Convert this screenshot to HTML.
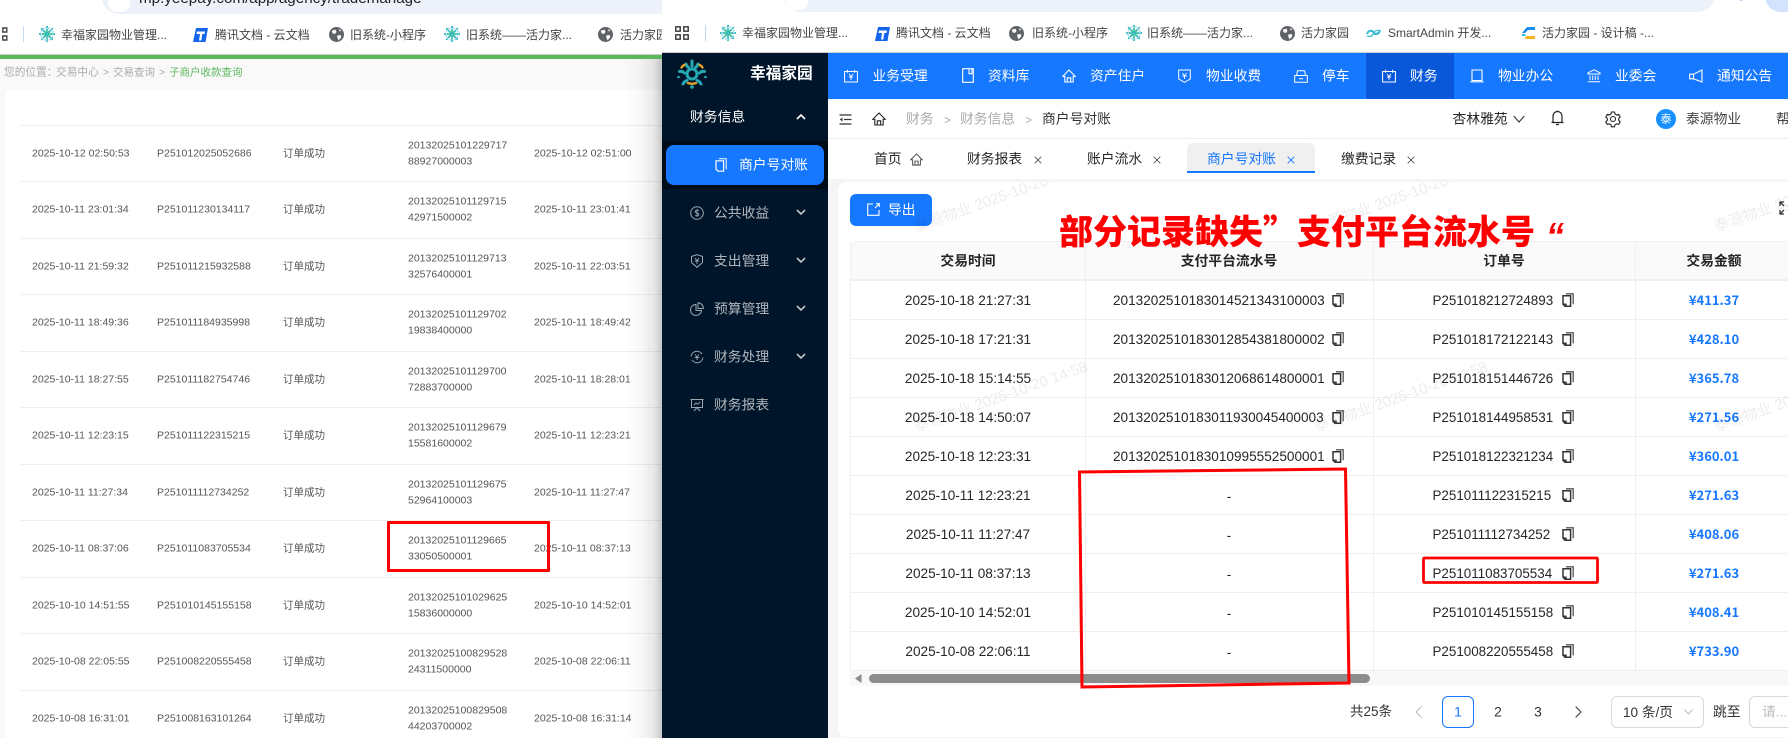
<!DOCTYPE html>
<html lang="zh-CN"><head><meta charset="utf-8"><title>商户号对账</title>
<style>
*{box-sizing:border-box}
html,body{margin:0;padding:0;width:1788px;height:738px;overflow:hidden;background:#fff;font-family:"Liberation Sans","Noto Sans CJK SC",sans-serif}
.a{position:absolute}
.l,.c{position:absolute;white-space:nowrap;line-height:1.2;margin-top:1px}
.l{transform:translateY(-50%)}
.c{transform:translate(-50%,-50%)}
.lt{font-size:10.5px;color:#555}
.bk{font-size:12px;color:#444}
.nav{font-size:13.8px;color:#fff}
.sd{font-size:13.8px;color:rgba(255,255,255,.68)}
.td{font-size:13.6px;color:#262626}
.po{font-size:13.4px;color:#262626}
.th{font-size:13.8px;color:#262626;font-weight:700}
.am{font-family:"Noto Sans CJK SC","Liberation Sans",sans-serif;font-size:13px;color:#1677ff;font-weight:600}
.hl{position:absolute;height:1px;background:#efefef}
.vl{position:absolute;width:1px;background:#efefef}
.wm{position:absolute;white-space:nowrap;font-size:15px;line-height:16px;color:rgba(0,0,0,.075);transform:rotate(-19.5deg);transform-origin:0 50%}
svg{position:absolute;overflow:visible;fill:none}
</style></head><body>
<svg width="0" height="0" style="position:absolute">
<defs>
<symbol id="flake" viewBox="0 0 14 14"><g stroke="#2ab4c0" stroke-width="1.500" stroke-dasharray="1.800 .7"><path d="M7 0v14M0 7h14M2 2l10 10M12 2L2 12"/></g><circle cx="7" cy="7" r="2.400" stroke="#5fcba0" stroke-width="1.400"/><circle cx="7" cy="7" r="5.400" stroke="#6dc9d6" stroke-width="1.300" stroke-dasharray="1.200 1.200"/></symbol>
<symbol id="globe" viewBox="0 0 14 14"><circle cx="7" cy="7" r="7" fill="#5f6368"/><path d="M2.500 3.500L6 2.500l1 2-1.500 2-2-.5zM7.500 8l3.500-.5.5 2-2.500 3-1-2zM9.500 1.800l2 1.500-1.500 1z" fill="#fff"/></symbol>
<symbol id="tx" viewBox="0 0 15 15"><path d="M3 1h12l-2.500 14H0z" fill="#1366ec"/><path d="M4 4.500h8l-.5 2.500H9.300l-1 6.500H6l1-6.500H3.500z" fill="#fff"/></symbol>
<symbol id="grid" viewBox="0 0 14 14"><g stroke="#444" stroke-width="1.500"><rect x=".8" y=".8" width="4.400" height="4.400"/><rect x="8.800" y=".8" width="4.400" height="4.400"/><rect x=".8" y="8.800" width="4.400" height="4.400"/><rect x="8.800" y="8.800" width="4.400" height="4.400"/></g></symbol>
<symbol id="copy" viewBox="0 0 12 14"><path d="M4 .8h7.200v10.400" stroke="#555" stroke-width="1.300"/><path d="M1 2.800h7.600v10.400H3L1 11.200z" stroke="#333" stroke-width="1.500" fill="#fff"/><path d="M1 11.200h3v2" stroke="#333" stroke-width="1.400"/></symbol>
<symbol id="hm" viewBox="0 0 14 14"><path d="M7 1L.8 7.300h2V13h8.400V7.300h2zM5.300 13V8.800h3.400V13" stroke="currentColor" stroke-width="1.100"/></symbol>
<symbol id="x" viewBox="0 0 8 8"><path d="M.7.7l6.600 6.600M7.300.7L.7 7.300" stroke="currentColor" stroke-width=".9"/></symbol>
<symbol id="chev" viewBox="0 0 10 6"><path d="M1 1l4 4 4-4" stroke="currentColor" stroke-width="1.600"/></symbol>
</defs></svg>

<!-- LEFT WINDOW -->
<div class="a" style="left:0;top:0;width:662px;height:738px;background:#fff;overflow:hidden">
 <div class="a" style="left:102px;top:-20px;width:600px;height:34px;background:#edf2fa;border-radius:17px"></div>
 <div class="a" style="left:108px;top:-6px;width:22px;height:18px;border-radius:10px;background:#fff"></div>
 <svg style="left:70px;top:-8px" width="16" height="12"><circle cx="6" cy="2" r="5" stroke="#444" stroke-width="1.500"/></svg>
 <svg style="left:0;top:-4px" width="50" height="10"><path d="M3 0l-2 2 2 2M38 0l2 2-2 2" stroke="#888" stroke-width="1.200"/></svg>
 <div class="l" style="left:139px;top:-2px;font-size:15.200px;color:#222">mp.yeepay.com/app/agency/trademanage</div>
 <svg style="left:2px;top:27px" width="6" height="14"><path d="M.8 1h4v4h-4zM.8 9h4v4h-4z" stroke="#444" stroke-width="1.400"/></svg>
 <div class="a" style="left:23px;top:26px;width:1px;height:16px;background:#c7d7f0"></div>
 <svg style="left:39px;top:26px" width="16" height="16"><use href="#flake"/></svg><div class="l bk" style="left:61px;top:34px">幸福家园物业管理...</div>
 <svg style="left:193px;top:27px" width="15" height="15"><use href="#tx"/></svg><div class="l bk" style="left:215px;top:34px">腾讯文档 - 云文档</div>
 <svg style="left:329px;top:27px" width="15" height="15"><use href="#globe"/></svg><div class="l bk" style="left:350px;top:34px">旧系统-小程序</div>
 <svg style="left:444px;top:26px" width="16" height="16"><use href="#flake"/></svg><div class="l bk" style="left:466px;top:34px">旧系统——活力家...</div>
 <svg style="left:598px;top:27px" width="15" height="15"><use href="#globe"/></svg><div class="l bk" style="left:620px;top:34px">活力家园</div>
 <div class="a" style="left:0;top:54px;width:662px;height:1px;background:#ccc"></div>
 <div class="a" style="left:0;top:55px;width:662px;height:4px;background:#5cb85c"></div>
 <div class="a" style="left:0;top:59px;width:662px;height:679px;background:#f9f9f9"></div>
 <div class="l lt" style="left:4px;top:72px;color:#aaa;font-size:10.700px">您的位置：</div>
 <div class="l lt" style="left:56px;top:72px;color:#aaa;font-size:10.700px">交易中心</div>
 <div class="l lt" style="left:103px;top:72px;color:#aaa">&gt;</div>
 <div class="l lt" style="left:113px;top:72px;color:#aaa">交易查询</div>
 <div class="l lt" style="left:159px;top:72px;color:#aaa">&gt;</div>
 <div class="l lt" style="left:169px;top:72px;color:#5cb85c">子商户收款查询</div>
 <div class="a" style="left:5px;top:90px;width:657px;height:648px;background:#fff"></div>

 <div class="hl" style="left:20px;width:642px;top:125px"></div>
 <div class="hl" style="left:20px;width:642px;top:181px"></div>
 <div class="hl" style="left:20px;width:642px;top:238px"></div>
 <div class="hl" style="left:20px;width:642px;top:294px"></div>
 <div class="hl" style="left:20px;width:642px;top:351px"></div>
 <div class="hl" style="left:20px;width:642px;top:407px"></div>
 <div class="hl" style="left:20px;width:642px;top:464px"></div>
 <div class="hl" style="left:20px;width:642px;top:520px"></div>
 <div class="hl" style="left:20px;width:642px;top:577px"></div>
 <div class="hl" style="left:20px;width:642px;top:633px"></div>
 <div class="hl" style="left:20px;width:642px;top:690px"></div>

 <div class="l lt" style="left:32px;top:153px">2025-10-12 02:50:53</div><div class="l lt" style="left:157px;top:153px">P251012025052686</div><div class="l lt" style="left:283px;top:153px">订单成功</div><div class="l lt" style="left:408px;top:145px">20132025101229717</div><div class="l lt" style="left:408px;top:161px">88927000003</div><div class="l lt" style="left:534px;top:153px">2025-10-12 02:51:00</div>
 <div class="l lt" style="left:32px;top:209px">2025-10-11 23:01:34</div><div class="l lt" style="left:157px;top:209px">P251011230134117</div><div class="l lt" style="left:283px;top:209px">订单成功</div><div class="l lt" style="left:408px;top:201px">20132025101129715</div><div class="l lt" style="left:408px;top:217px">42971500002</div><div class="l lt" style="left:534px;top:209px">2025-10-11 23:01:41</div>
 <div class="l lt" style="left:32px;top:266px">2025-10-11 21:59:32</div><div class="l lt" style="left:157px;top:266px">P251011215932588</div><div class="l lt" style="left:283px;top:266px">订单成功</div><div class="l lt" style="left:408px;top:258px">20132025101129713</div><div class="l lt" style="left:408px;top:274px">32576400001</div><div class="l lt" style="left:534px;top:266px">2025-10-11 22:03:51</div>
 <div class="l lt" style="left:32px;top:322px">2025-10-11 18:49:36</div><div class="l lt" style="left:157px;top:322px">P251011184935998</div><div class="l lt" style="left:283px;top:322px">订单成功</div><div class="l lt" style="left:408px;top:314px">20132025101129702</div><div class="l lt" style="left:408px;top:330px">19838400000</div><div class="l lt" style="left:534px;top:322px">2025-10-11 18:49:42</div>
 <div class="l lt" style="left:32px;top:379px">2025-10-11 18:27:55</div><div class="l lt" style="left:157px;top:379px">P251011182754746</div><div class="l lt" style="left:283px;top:379px">订单成功</div><div class="l lt" style="left:408px;top:371px">20132025101129700</div><div class="l lt" style="left:408px;top:387px">72883700000</div><div class="l lt" style="left:534px;top:379px">2025-10-11 18:28:01</div>
 <div class="l lt" style="left:32px;top:435px">2025-10-11 12:23:15</div><div class="l lt" style="left:157px;top:435px">P251011122315215</div><div class="l lt" style="left:283px;top:435px">订单成功</div><div class="l lt" style="left:408px;top:427px">20132025101129679</div><div class="l lt" style="left:408px;top:443px">15581600002</div><div class="l lt" style="left:534px;top:435px">2025-10-11 12:23:21</div>
 <div class="l lt" style="left:32px;top:492px">2025-10-11 11:27:34</div><div class="l lt" style="left:157px;top:492px">P251011112734252</div><div class="l lt" style="left:283px;top:492px">订单成功</div><div class="l lt" style="left:408px;top:484px">20132025101129675</div><div class="l lt" style="left:408px;top:500px">52964100003</div><div class="l lt" style="left:534px;top:492px">2025-10-11 11:27:47</div>
 <div class="l lt" style="left:32px;top:548px">2025-10-11 08:37:06</div><div class="l lt" style="left:157px;top:548px">P251011083705534</div><div class="l lt" style="left:283px;top:548px">订单成功</div><div class="l lt" style="left:408px;top:540px">20132025101129665</div><div class="l lt" style="left:408px;top:556px">33050500001</div><div class="l lt" style="left:534px;top:548px">2025-10-11 08:37:13</div>
 <div class="l lt" style="left:32px;top:605px">2025-10-10 14:51:55</div><div class="l lt" style="left:157px;top:605px">P251010145155158</div><div class="l lt" style="left:283px;top:605px">订单成功</div><div class="l lt" style="left:408px;top:597px">20132025101029625</div><div class="l lt" style="left:408px;top:613px">15836000000</div><div class="l lt" style="left:534px;top:605px">2025-10-10 14:52:01</div>
 <div class="l lt" style="left:32px;top:661px">2025-10-08 22:05:55</div><div class="l lt" style="left:157px;top:661px">P251008220555458</div><div class="l lt" style="left:283px;top:661px">订单成功</div><div class="l lt" style="left:408px;top:653px">20132025100829528</div><div class="l lt" style="left:408px;top:669px">24311500000</div><div class="l lt" style="left:534px;top:661px">2025-10-08 22:06:11</div>
 <div class="l lt" style="left:32px;top:718px">2025-10-08 16:31:01</div><div class="l lt" style="left:157px;top:718px">P251008163101264</div><div class="l lt" style="left:283px;top:718px">订单成功</div><div class="l lt" style="left:408px;top:710px">20132025100829508</div><div class="l lt" style="left:408px;top:726px">44203700002</div><div class="l lt" style="left:534px;top:718px">2025-10-08 16:31:14</div>

 <div class="a" style="left:622px;top:59px;width:40px;height:679px;background:linear-gradient(90deg,rgba(0,0,0,0),rgba(0,0,0,.02) 40%,rgba(0,0,0,.09) 80%,rgba(0,0,0,.22))"></div>
 <div class="a" style="left:387px;top:521px;width:163px;height:51px;border:3px solid #f00;border-radius:1px"></div>
</div>

<!-- RIGHT WINDOW -->
<div class="a" style="left:662px;top:0;width:1126px;height:738px;background:#fff;overflow:hidden"></div>
<div class="a" style="left:784px;top:-20px;width:930px;height:32px;background:#edf2fa;border-radius:16px"></div>
<div class="a" style="left:786px;top:-8px;width:22px;height:18px;border-radius:10px;background:#fff"></div>
<div class="a" style="left:1765px;top:-20px;width:40px;height:32px;border-radius:16px;background:#d3e3fd"></div>
<svg style="left:1734px;top:-7px" width="14" height="10"><circle cx="7" cy="-1" r="4.500" stroke="#0b57d0" stroke-width="1.600" transform="translate(0,3)"/></svg>
<svg style="left:1657px;top:-5px" width="40" height="8"><path d="M0 4h6v-4M21 0l3 4 3-4" stroke="#555" stroke-width="1.200"/></svg>
<div class="l" style="left:812px;top:-8px;font-size:15.200px;color:#222">mp.yeepay.com/app/agency/trademanage</div>

<svg style="left:675px;top:26px" width="14" height="14"><use href="#grid"/></svg>
<div class="a" style="left:705px;top:25px;width:1px;height:16px;background:#c7d7f0"></div>
<svg style="left:720px;top:25px" width="16" height="16"><use href="#flake"/></svg><div class="l bk" style="left:742px;top:32px">幸福家园物业管理...</div>
<svg style="left:875px;top:26px" width="15" height="15"><use href="#tx"/></svg><div class="l bk" style="left:896px;top:32px">腾讯文档 - 云文档</div>
<svg style="left:1009px;top:26px" width="15" height="15"><use href="#globe"/></svg><div class="l bk" style="left:1032px;top:32px">旧系统-小程序</div>
<svg style="left:1126px;top:25px" width="16" height="16"><use href="#flake"/></svg><div class="l bk" style="left:1147px;top:32px">旧系统——活力家...</div>
<svg style="left:1280px;top:26px" width="15" height="15"><use href="#globe"/></svg><div class="l bk" style="left:1301px;top:32px">活力家园</div>
<svg style="left:1366px;top:27px" width="15" height="12"><path d="M1 7c1.500-4 5-4 6.500-1.500S13 7.500 14 3" stroke="#30b8d8" stroke-width="2"/><path d="M1 9c3 1 5 .5 7-3s4-3 6-2" stroke="#3fc1c9" stroke-width="1.300"/></svg><div class="l bk" style="left:1388px;top:32px">SmartAdmin 开发...</div>
<svg style="left:1522px;top:26px" width="13" height="14"><path d="M5 1h8v3H6L3 7H0z" fill="#1c8cf0"/><path d="M0 8h3l1 2h-4z" fill="#25c0e0"/><path d="M4 10h9v3H3z" fill="#f7b41e"/></svg><div class="l bk" style="left:1542px;top:32px">活力家园 - 设计稿 -...</div>
<div class="a" style="left:662px;top:52px;width:1126px;height:1px;background:#d0d0d0"></div>

<!-- Sidebar -->
<div class="a" style="left:662px;top:53px;width:166px;height:685px;background:#00152a"></div>
<div class="a" style="left:662px;top:141px;width:166px;height:48px;background:#000c17"></div>
<svg style="left:677px;top:59px" width="30" height="30" viewBox="0 0 30 30">
 <circle cx="15" cy="15" r="5" stroke="#27a9b4" stroke-width="3"/>
 <g stroke="#27a9b4" stroke-width="3" stroke-linecap="round"><path d="M15 2v5M2.500 12.500c2-.5 3.500 0 5 1.500M27.500 12.500c-2-.5-3.500 0-5 1.500M6 25c1-2 2-3 4-3.500M24 25c-1-2-2-3-4-3.500M9 5c.5 1.500 1 2.500 2.500 3.500M21 5c-.5 1.500-1 2.500-2.500 3.500"/></g>
 <g stroke="#e0a02c" stroke-width="2.400" stroke-linecap="round"><path d="M4.500 8.500c1-1.500 2-2.300 3-2.600M25.500 8.500c-1-1.500-2-2.300-3-2.600M11 24c2.500 1 5.500 1 8 0"/></g>
 <g fill="#27a9b4"><circle cx="15" cy="28" r="1.800"/><circle cx="1.500" cy="18" r="1.300"/><circle cx="28.500" cy="18" r="1.300"/></g>
</svg>
<div class="l" style="left:750px;top:73.500px;font-size:15.700px;font-weight:700;color:#fff">幸福家园</div>
<div class="l" style="left:690px;top:117px;font-size:13.800px;color:#fff">财务信息</div>
<svg style="left:796px;top:114px;color:#fff" width="10" height="6"><path d="M1 5l4-4 4 4" stroke="currentColor" stroke-width="1.600"/></svg>
<div class="a" style="left:666px;top:145px;width:158px;height:40px;border-radius:8px;background:#1677ff"></div>
<svg style="left:715px;top:158px" width="12" height="14" viewBox="0 0 12 14"><path d="M4 .8h7.200v10.400" stroke="#fff" stroke-width="1"/><path d="M1 2.800h7.600v10.400H3L1 11.200z" stroke="#fff" stroke-width="1.200"/></svg>
<div class="l nav" style="left:739px;top:165px">商户号对账</div>

<div class="l sd" style="left:714px;top:213px">公共收益</div>
<div class="l sd" style="left:714px;top:261px">支出管理</div>
<div class="l sd" style="left:714px;top:309px">预算管理</div>
<div class="l sd" style="left:714px;top:357px">财务处理</div>
<div class="l sd" style="left:714px;top:405px">财务报表</div>
<svg style="left:796px;top:209px;color:rgba(255,255,255,.75)" width="10" height="6"><use href="#chev"/></svg>
<svg style="left:796px;top:257px;color:rgba(255,255,255,.75)" width="10" height="6"><use href="#chev"/></svg>
<svg style="left:796px;top:305px;color:rgba(255,255,255,.75)" width="10" height="6"><use href="#chev"/></svg>
<svg style="left:796px;top:353px;color:rgba(255,255,255,.75)" width="10" height="6"><use href="#chev"/></svg>
<svg style="left:690px;top:206px;color:rgba(255,255,255,.62)" width="14" height="14" viewBox="0 0 14 14"><circle cx="7" cy="7" r="6.300" stroke="currentColor" stroke-width="1"/><path d="M9 4.800C8.500 4 6 3.800 5.300 5s.7 1.800 1.700 2 2.300.8 1.800 2-3 1-3.500.2M7 3v8" stroke="currentColor" stroke-width=".9"/></svg>
<svg style="left:690px;top:254px;color:rgba(255,255,255,.62)" width="14" height="14" viewBox="0 0 14 14"><path d="M1.500 2.500L7 .7l5.500 1.800v6L7 13.300 1.500 8.500z" stroke="currentColor" stroke-width="1"/><path d="M5 4l2 2.500L9 4M4.800 7h4.400M7 6.500v3.500" stroke="currentColor" stroke-width=".9"/></svg>
<svg style="left:690px;top:302px;color:rgba(255,255,255,.62)" width="14" height="14" viewBox="0 0 14 14"><path d="M6 2.500a5.500 5.500 0 1 0 5.500 6H6z" stroke="currentColor" stroke-width="1"/><path d="M8 .7a5.500 5.500 0 0 1 5.300 5.800H8z" stroke="currentColor" stroke-width="1"/></svg>
<svg style="left:690px;top:350px;color:rgba(255,255,255,.62)" width="14" height="14" viewBox="0 0 14 14"><path d="M1 6.500A6 6 0 0 1 12 4M13 7.500A6 6 0 0 1 2 10" stroke="currentColor" stroke-width="1"/><path d="M5 4.500l2 2.500 2-2.500M4.800 7.500h4.400M7 7v3" stroke="currentColor" stroke-width=".9"/></svg>
<svg style="left:690px;top:398px;color:rgba(255,255,255,.62)" width="14" height="14" viewBox="0 0 14 14"><path d="M.5 1.500h13M1.500 1.500v8h11v-8M4 13l3-3.500 3 3.500" stroke="currentColor" stroke-width="1"/><path d="M3.800 7l2.200-2 1.500 1.300L10 4" stroke="currentColor" stroke-width=".9"/></svg>

<!-- Top nav -->
<div class="a" style="left:828px;top:53px;width:960px;height:46px;background:#1677ff"></div>
<div class="a" style="left:1366px;top:53px;width:88px;height:46px;background:#0958d9"></div>
<div class="l nav" style="left:872.500px;top:76px">业务受理</div>
<div class="l nav" style="left:988px;top:76px">资料库</div>
<div class="l nav" style="left:1090px;top:76px">资产住户</div>
<div class="l nav" style="left:1206px;top:76px">物业收费</div>
<div class="l nav" style="left:1322px;top:76px">停车</div>
<div class="l nav" style="left:1410px;top:76px">财务</div>
<div class="l nav" style="left:1498px;top:76px">物业办公</div>
<div class="l nav" style="left:1615px;top:76px">业委会</div>
<div class="l nav" style="left:1717px;top:76px">通知公告</div>
<svg style="left:844px;top:69px;color:#fff" width="14" height="14" viewBox="0 0 14 14"><path d="M.6 2.500h12.800v10.500H.6zM3.500.8v3M10.500.8v3" stroke="currentColor"/><path d="M5 5l2 2.500L9 5M5 8h4M7 7.500V11" stroke="currentColor" stroke-width=".9"/></svg>
<svg style="left:962px;top:68px;color:#fff" width="12" height="15" viewBox="0 0 12 15"><path d="M.7.7h10.600v13.600H.7zM7 .7v5h3V.7" stroke="currentColor" stroke-width="1.100"/></svg>
<svg style="left:1062px;top:69px;color:#fff" width="14" height="14"><use href="#hm"/></svg>
<svg style="left:1178px;top:69px;color:#fff" width="13" height="14" viewBox="0 0 13 14"><path d="M.7 1h11.600v9L6.500 13.300.7 10z" stroke="currentColor"/><path d="M4.300 4l2.200 2.500L8.700 4M4.300 7h4.400M6.500 6.500V10" stroke="currentColor" stroke-width=".9"/></svg>
<svg style="left:1294px;top:70px;color:#fff" width="14" height="13" viewBox="0 0 14 13"><path d="M2.500 5.500L3.500.7h7l1 4.800M.7 5.500h12.600v6.800H.7zM5 8.800h4" stroke="currentColor"/></svg>
<svg style="left:1382px;top:69px;color:#fff" width="14" height="14" viewBox="0 0 14 14"><path d="M.6 2.500h12.800v10.500H.6zM3.500.8v3M10.500.8v3" stroke="currentColor"/><path d="M5 5l2 2.500L9 5M5 8h4M7 7.500V11" stroke="currentColor" stroke-width=".9"/></svg>
<svg style="left:1470px;top:69px;color:#fff" width="14" height="14" viewBox="0 0 14 14"><path d="M2 1h10v10.500H2zM.3 12.800h13.400" stroke="currentColor" stroke-width="1.100"/></svg>
<svg style="left:1587px;top:69px;color:#fff" width="14" height="14" viewBox="0 0 14 14"><path d="M7 .8l6 3v1.200H1V3.800zM3 6.500v4.500M5.700 6.500v4.500M8.300 6.500v4.500M11 6.500v4.500M.8 12.800h12.400" stroke="currentColor"/></svg>
<svg style="left:1689px;top:69px;color:#fff" width="14" height="14" viewBox="0 0 14 14"><path d="M13 1v12L4.500 9.800H.7V5.200h3.800zM4.500 5.200v4.600" stroke="currentColor" stroke-width="1.100"/></svg>

<!-- Breadcrumb bar -->
<div class="a" style="left:828px;top:99px;width:960px;height:40px;background:#fff;border-bottom:1px solid #f0f0f0"></div>
<svg style="left:839px;top:114px" width="13" height="11" viewBox="0 0 13 11"><path d="M.5 1h12M5 5.500h7.500M.5 10h12" stroke="#333" stroke-width="1.200"/><path d="M3.500 3.500L.8 5.500l2.700 2z" fill="#333"/></svg>
<svg style="left:872px;top:112px;color:#222" width="14" height="14"><use href="#hm"/></svg>
<div class="l" style="left:906px;top:119px;font-size:13.800px;color:#aaa">财务</div>
<div class="l" style="left:944px;top:119px;font-size:12px;color:#aaa">&gt;</div>
<div class="l" style="left:960px;top:119px;font-size:13.800px;color:#aaa">财务信息</div>
<div class="l" style="left:1025px;top:119px;font-size:12px;color:#aaa">&gt;</div>
<div class="l" style="left:1042px;top:119px;font-size:13.800px;color:#333">商户号对账</div>
<div class="l" style="left:1452.500px;top:119px;font-size:13.800px;color:#262626">杏林雅苑</div>
<svg style="left:1513px;top:115px" width="12" height="8" viewBox="0 0 12 8"><path d="M.7 1l5.300 6L11.300 1" stroke="#333" stroke-width="1.100"/></svg>
<svg style="left:1551px;top:110px" width="13" height="16" viewBox="0 0 13 16"><path d="M.5 12.500h12M2 12.500V6a4.500 4.500 0 0 1 9 0v6.500M5 14.500h3M6.500.5v1" stroke="#222" stroke-width="1.200"/></svg>
<svg style="left:1605px;top:111px" width="16" height="16" viewBox="0 0 16 16"><circle cx="8" cy="8" r="2.500" stroke="#222" stroke-width="1.100"/><path d="M6.500 1h3l.5 2 1.700 1 2-.6 1.500 2.600-1.500 1.500v1.800l1.500 1.500-1.500 2.600-2-.6-1.700 1-.5 2h-3l-.5-2-1.700-1-2 .6L.8 10.800l1.500-1.500V7.500L.8 6l1.500-2.600 2 .6L6 3z" stroke="#222" stroke-width="1.100"/></svg>
<div class="a" style="left:1656px;top:109px;width:20px;height:20px;border-radius:50%;background:#1890ff"></div>
<div class="c" style="left:1666px;top:119px;font-size:11px;color:#fff">泰</div>
<div class="l" style="left:1686px;top:119px;font-size:13.800px;color:#444">泰源物业</div>
<div class="l" style="left:1776px;top:119px;font-size:13.800px;color:#444">帮</div>

<!-- Tabs -->
<div class="a" style="left:828px;top:139px;width:960px;height:40px;background:#fff;box-shadow:0 1px 3px rgba(0,0,0,.07)"></div>
<div class="a" style="left:1187px;top:143px;width:128px;height:30px;background:#f0f0f0;border-radius:6px 6px 0 0;border-bottom:2px solid #1677ff"></div>
<div class="l" style="left:874px;top:159px;font-size:13.800px;color:#262626">首页</div>
<svg style="left:910px;top:153px;color:#555" width="13" height="13"><use href="#hm"/></svg>
<div class="l" style="left:967px;top:159px;font-size:13.800px;color:#262626">财务报表</div>
<svg style="left:1034px;top:156px;color:#555" width="8" height="8"><use href="#x"/></svg>
<div class="l" style="left:1087px;top:159px;font-size:13.800px;color:#262626">账户流水</div>
<svg style="left:1153px;top:156px;color:#555" width="8" height="8"><use href="#x"/></svg>
<div class="l" style="left:1207px;top:159px;font-size:13.800px;color:#1677ff">商户号对账</div>
<svg style="left:1287px;top:156px;color:#1677ff" width="8" height="8"><use href="#x"/></svg>
<div class="l" style="left:1341px;top:159px;font-size:13.800px;color:#262626">缴费记录</div>
<svg style="left:1407px;top:156px;color:#555" width="8" height="8"><use href="#x"/></svg>

<!-- Content -->
<div class="a" style="left:828px;top:179px;width:960px;height:559px;background:#f5f5f5"></div>
<div class="a" style="left:838px;top:182px;width:950px;height:555px;background:#fff;border-radius:8px 0 0 8px;overflow:hidden"></div>
<div class="a" style="left:850px;top:194px;width:82px;height:32px;background:#1677ff;border-radius:6px"></div>
<svg style="left:867px;top:203px" width="13" height="13" viewBox="0 0 13 13"><path d="M6 1H.7v11.300H12V7M8 5l4-4M9 .7h3.300V4" stroke="#fff" stroke-width="1.100"/></svg>
<div class="l" style="left:888px;top:210px;font-size:13.800px;color:#fff">导出</div>
<svg style="left:1780px;top:202px" width="12" height="12" viewBox="0 0 12 12"><path d="M0 4V0h4M8 0h4v4M0 8v4h4M8 12h4V8M0 0l4 4M12 0L8 4M0 12l4-4M12 12L8 8" stroke="#333" stroke-width="1.300"/></svg>

<!-- table -->
<div class="a" style="left:850px;top:241px;width:938px;height:39px;background:#fafafa;border:1px solid #f0f0f0;border-right:0;border-radius:8px 0 0 0"></div>
<div class="vl" style="left:850px;top:241px;height:430px"></div>
<div class="vl" style="left:1085px;top:241px;height:430px"></div>
<div class="vl" style="left:1373px;top:241px;height:430px"></div>
<div class="vl" style="left:1635px;top:241px;height:430px"></div>
<div class="hl" style="left:850px;width:938px;top:280px"></div>
<div class="hl" style="left:850px;width:938px;top:319px"></div>
<div class="hl" style="left:850px;width:938px;top:358px"></div>
<div class="hl" style="left:850px;width:938px;top:397px"></div>
<div class="hl" style="left:850px;width:938px;top:436px"></div>
<div class="hl" style="left:850px;width:938px;top:475px"></div>
<div class="hl" style="left:850px;width:938px;top:514px"></div>
<div class="hl" style="left:850px;width:938px;top:553px"></div>
<div class="hl" style="left:850px;width:938px;top:592px"></div>
<div class="hl" style="left:850px;width:938px;top:631px"></div>
<div class="hl" style="left:850px;width:938px;top:670px"></div>
<div class="c th" style="left:968px;top:261px">交易时间</div>
<div class="c th" style="left:1229px;top:261px">支付平台流水号</div>
<div class="c th" style="left:1504px;top:261px">订单号</div>
<div class="c th" style="left:1714px;top:261px">交易金额</div>

<div class="c td" style="left:968px;top:300px">2025-10-18 21:27:31</div><div class="l td" style="left:1113px;top:300px">2013202510183014521343100003</div><svg style="left:1332px;top:293px" width="12" height="14"><use href="#copy"/></svg><div class="l po" style="left:1432.500px;top:300px">P251018212724893</div><svg style="left:1562px;top:293px" width="12" height="14"><use href="#copy"/></svg><div class="c am" style="left:1714px;top:299px">¥411.37</div>
<div class="c td" style="left:968px;top:339px">2025-10-18 17:21:31</div><div class="l td" style="left:1113px;top:339px">2013202510183012854381800002</div><svg style="left:1332px;top:332px" width="12" height="14"><use href="#copy"/></svg><div class="l po" style="left:1432.500px;top:339px">P251018172122143</div><svg style="left:1562px;top:332px" width="12" height="14"><use href="#copy"/></svg><div class="c am" style="left:1714px;top:338px">¥428.10</div>
<div class="c td" style="left:968px;top:378px">2025-10-18 15:14:55</div><div class="l td" style="left:1113px;top:378px">2013202510183012068614800001</div><svg style="left:1332px;top:371px" width="12" height="14"><use href="#copy"/></svg><div class="l po" style="left:1432.500px;top:378px">P251018151446726</div><svg style="left:1562px;top:371px" width="12" height="14"><use href="#copy"/></svg><div class="c am" style="left:1714px;top:377px">¥365.78</div>
<div class="c td" style="left:968px;top:417px">2025-10-18 14:50:07</div><div class="l td" style="left:1113px;top:417px">2013202510183011930045400003</div><svg style="left:1332px;top:410px" width="12" height="14"><use href="#copy"/></svg><div class="l po" style="left:1432.500px;top:417px">P251018144958531</div><svg style="left:1562px;top:410px" width="12" height="14"><use href="#copy"/></svg><div class="c am" style="left:1714px;top:416px">¥271.56</div>
<div class="c td" style="left:968px;top:456px">2025-10-18 12:23:31</div><div class="l td" style="left:1113px;top:456px">2013202510183010995552500001</div><svg style="left:1332px;top:449px" width="12" height="14"><use href="#copy"/></svg><div class="l po" style="left:1432.500px;top:456px">P251018122321234</div><svg style="left:1562px;top:449px" width="12" height="14"><use href="#copy"/></svg><div class="c am" style="left:1714px;top:455px">¥360.01</div>
<div class="c td" style="left:968px;top:495px">2025-10-11 12:23:21</div><div class="c td" style="left:1229px;top:496px">-</div><div class="l po" style="left:1432.500px;top:495px">P251011122315215</div><svg style="left:1562px;top:488px" width="12" height="14"><use href="#copy"/></svg><div class="c am" style="left:1714px;top:494px">¥271.63</div>
<div class="c td" style="left:968px;top:534px">2025-10-11 11:27:47</div><div class="c td" style="left:1229px;top:535px">-</div><div class="l po" style="left:1432.500px;top:534px">P251011112734252</div><svg style="left:1562px;top:527px" width="12" height="14"><use href="#copy"/></svg><div class="c am" style="left:1714px;top:533px">¥408.06</div>
<div class="c td" style="left:968px;top:573px">2025-10-11 08:37:13</div><div class="c td" style="left:1229px;top:574px">-</div><div class="l po" style="left:1432.500px;top:573px">P251011083705534</div><svg style="left:1562px;top:566px" width="12" height="14"><use href="#copy"/></svg><div class="c am" style="left:1714px;top:572px">¥271.63</div>
<div class="c td" style="left:968px;top:612px">2025-10-10 14:52:01</div><div class="c td" style="left:1229px;top:613px">-</div><div class="l po" style="left:1432.500px;top:612px">P251010145155158</div><svg style="left:1562px;top:605px" width="12" height="14"><use href="#copy"/></svg><div class="c am" style="left:1714px;top:611px">¥408.41</div>
<div class="c td" style="left:968px;top:651px">2025-10-08 22:06:11</div><div class="c td" style="left:1229px;top:652px">-</div><div class="l po" style="left:1432.500px;top:651px">P251008220555458</div><svg style="left:1562px;top:644px" width="12" height="14"><use href="#copy"/></svg><div class="c am" style="left:1714px;top:650px">¥733.90</div>

<!-- scrollbar -->
<div class="a" style="left:850px;top:671px;width:938px;height:15px;background:#f8f8f8"></div>
<svg style="left:855px;top:674px" width="7" height="9"><path d="M6.500 0v9L0 4.500z" fill="#8c8c8c"/></svg>
<div class="a" style="left:869px;top:674px;width:501px;height:9px;border-radius:5px;background:#8c8c8c"></div>

<!-- watermarks -->
<div class="a" style="left:838px;top:182px;width:950px;height:556px;overflow:hidden;pointer-events:none">
 <div class="wm" style="left:77px;top:38px">泰源物业 2025-10-20 14:58</div>
 <div class="wm" style="left:477px;top:38px">泰源物业 2025-10-20 14:58</div>
 <div class="wm" style="left:877px;top:38px">泰源物业 2025-10-20 14:58</div>
 <div class="wm" style="left:77px;top:238px">泰源物业 2025-10-20 14:58</div>
 <div class="wm" style="left:477px;top:238px">泰源物业 2025-10-20 14:58</div>
 <div class="wm" style="left:877px;top:238px">泰源物业 2025-10-20 14:58</div>
</div>

<!-- pagination -->
<div class="l" style="left:1350px;top:711px;font-size:13.500px;color:#333">共25条</div>
<svg style="left:1415px;top:706px" width="7" height="12" viewBox="0 0 7 12"><path d="M6.300.7L1 6l5.300 5.300" stroke="#bbb" stroke-width="1.100"/></svg>
<div class="a" style="left:1442px;top:696px;width:32px;height:32px;border:1px solid #1677ff;border-radius:6px"></div>
<div class="c" style="left:1458px;top:712px;font-size:13.800px;color:#1677ff">1</div>
<div class="c" style="left:1498px;top:712px;font-size:13.800px;color:#333">2</div>
<div class="c" style="left:1538px;top:712px;font-size:13.800px;color:#333">3</div>
<svg style="left:1575px;top:706px" width="7" height="12" viewBox="0 0 7 12"><path d="M.7.7L6 6 .7 11.300" stroke="#444" stroke-width="1.100"/></svg>
<div class="a" style="left:1611px;top:696px;width:93px;height:32px;border:1px solid #d9d9d9;border-radius:6px"></div>
<div class="l" style="left:1623px;top:712px;font-size:13.600px;color:#333">10 条/页</div>
<svg style="left:1684px;top:709px" width="9" height="6" viewBox="0 0 9 6"><path d="M.5.5l4 4.500 4-4.500" stroke="#bbb" stroke-width="1"/></svg>
<div class="l" style="left:1713px;top:712px;font-size:13.800px;color:#333">跳至</div>
<div class="a" style="left:1749px;top:696px;width:60px;height:32px;border:1px solid #d9d9d9;border-radius:6px"></div>
<div class="l" style="left:1762px;top:712px;font-size:13.800px;color:#bbb">请...</div>

<!-- red annotations -->
<div class="l" style="left:1059px;top:230px;margin-top:0;font-family:'Noto Sans CJK SC',sans-serif;font-size:34px;font-weight:900;color:#f00;line-height:1">部分记录缺失”支付平台流水号</div>
<div class="l" style="left:1546px;top:236px;margin-top:0;font-family:'Liberation Sans',sans-serif;font-size:36px;font-weight:700;font-style:italic;color:#f00;line-height:1">“</div>
<svg style="left:0;top:0" width="1788" height="738"><path d="M1079.500 472L1345.500 469 1349 683 1082 687z" stroke="#f00" stroke-width="3"/><rect x="1423.500" y="558" width="174" height="24.500" rx="1" stroke="#f00" stroke-width="2.800"/></svg>
</body></html>
